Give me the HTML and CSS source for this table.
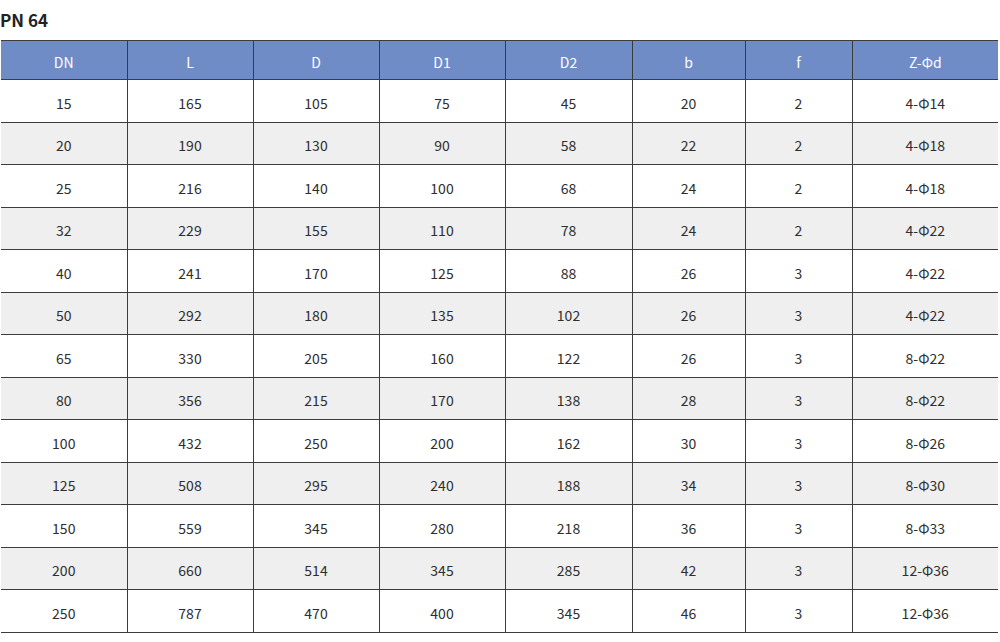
FILE: index.html
```html
<!DOCTYPE html>
<html>
<head>
<meta charset="utf-8">
<link rel="stylesheet" href="styles.css">
</head>
<body>
<h2 class="title">PN 64</h2>
<table class="spec">
<colgroup>
<col class="c1"><col class="c2"><col class="c3"><col class="c4"><col class="c5"><col class="c6"><col class="c7"><col class="c8">
</colgroup>
<thead>
<tr><th>DN</th><th>L</th><th>D</th><th>D1</th><th>D2</th><th>b</th><th>f</th><th>Z-Φd</th></tr>
</thead>
<tbody>
<tr><td>15</td><td>165</td><td>105</td><td>75</td><td>45</td><td>20</td><td>2</td><td>4-Φ14</td></tr>
<tr><td>20</td><td>190</td><td>130</td><td>90</td><td>58</td><td>22</td><td>2</td><td>4-Φ18</td></tr>
<tr><td>25</td><td>216</td><td>140</td><td>100</td><td>68</td><td>24</td><td>2</td><td>4-Φ18</td></tr>
<tr><td>32</td><td>229</td><td>155</td><td>110</td><td>78</td><td>24</td><td>2</td><td>4-Φ22</td></tr>
<tr><td>40</td><td>241</td><td>170</td><td>125</td><td>88</td><td>26</td><td>3</td><td>4-Φ22</td></tr>
<tr><td>50</td><td>292</td><td>180</td><td>135</td><td>102</td><td>26</td><td>3</td><td>4-Φ22</td></tr>
<tr><td>65</td><td>330</td><td>205</td><td>160</td><td>122</td><td>26</td><td>3</td><td>8-Φ22</td></tr>
<tr><td>80</td><td>356</td><td>215</td><td>170</td><td>138</td><td>28</td><td>3</td><td>8-Φ22</td></tr>
<tr><td>100</td><td>432</td><td>250</td><td>200</td><td>162</td><td>30</td><td>3</td><td>8-Φ26</td></tr>
<tr><td>125</td><td>508</td><td>295</td><td>240</td><td>188</td><td>34</td><td>3</td><td>8-Φ30</td></tr>
<tr><td>150</td><td>559</td><td>345</td><td>280</td><td>218</td><td>36</td><td>3</td><td>8-Φ33</td></tr>
<tr><td>200</td><td>660</td><td>514</td><td>345</td><td>285</td><td>42</td><td>3</td><td>12-Φ36</td></tr>
<tr><td>250</td><td>787</td><td>470</td><td>400</td><td>345</td><td>46</td><td>3</td><td>12-Φ36</td></tr>
</tbody>
</table>
</body>
</html>
```
FILE: styles.css
```css
html, body {
  margin: 0;
  padding: 0;
  background: #ffffff;
}
body {
  font-family: "Noto Sans CJK SC", "Noto Sans", sans-serif;
  color: #2e2e2e;
}
.title {
  margin: 0;
  height: 40px;
  line-height: 40px;
  font-size: 17px;
  font-weight: 700;
  color: #222222;
  padding-left: 0;
}
.spec {
  border-collapse: collapse;
  table-layout: fixed;
  width: 997px;
  margin-left: 1px;
  font-size: 14px;
}
.c1 { width: 126px; }
.c2 { width: 126px; }
.c3 { width: 126px; }
.c4 { width: 126px; }
.c5 { width: 127px; }
.c6 { width: 113px; }
.c7 { width: 107px; }
.c8 { width: 146px; }
.spec th, .spec td {
  border: 1px solid #3c3c3c;
  text-align: center;
  padding: 4px 0 0 0;
  font-weight: 400;
}
.spec th:first-child, .spec td:first-child { border-left: none; }
.spec th:last-child, .spec td:last-child { border-right: none; }
.spec thead th {
  background: #6f8cc7;
  color: #ffffff;
  height: 35px;
  padding-top: 3px;
}
.spec tbody td {
  height: 37.5px;
}
.spec tbody tr:nth-child(even) td {
  background: #efefef;
}
```
